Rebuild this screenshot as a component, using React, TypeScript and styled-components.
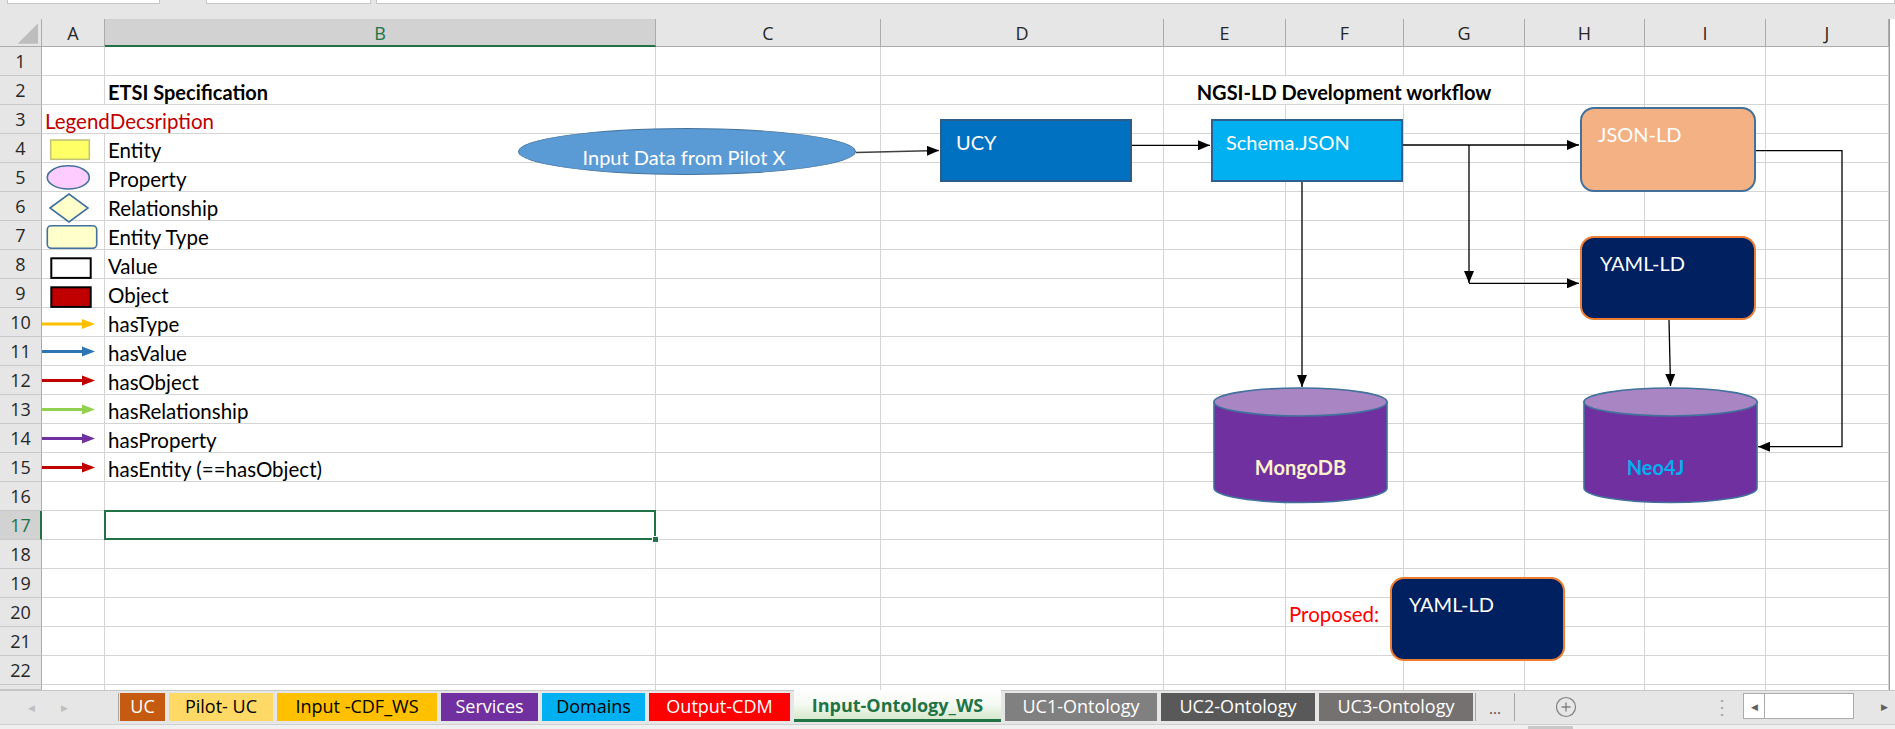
import React from 'react';
import styled, { createGlobalStyle } from 'styled-components';

const CELL_FONT = `Lato, "Liberation Sans", sans-serif`;
const UI_FONT = `"Open Sans", "Noto Sans", sans-serif`;
const GREEN = '#217346';
const GRID = '#D4D4D4';
const HEAD_LINE = '#ABABAB';

const COLS = ['A', 'B', 'C', 'D', 'E', 'F', 'G', 'H', 'I', 'J'];
const WIDTHS = [63, 551, 225, 283, 122, 118, 121, 120, 121, 123];
const ROW_COUNT = 22;
const ACTIVE_COL = 1;
const ACTIVE_ROW = 17;

type IconKind =
	| 'entity'
	| 'property'
	| 'relationship'
	| 'entityType'
	| 'value'
	| 'object'
	| 'hasType'
	| 'hasValue'
	| 'hasObject'
	| 'hasRelationship'
	| 'hasProperty'
	| 'hasEntity';

type CellSpec = {
	col: number;
	span?: number;
	text?: string;
	bold?: boolean;
	color?: string;
	center?: boolean;
	icon?: IconKind;
	selected?: boolean;
};

const ROWS: Record<number, CellSpec[]> = {
	2: [
		{ col: 1, text: 'ETSI Specification', bold: true },
		{ col: 4, span: 3, text: 'NGSI-LD Development workflow', bold: true, center: true },
	],
	3: [{ col: 0, span: 2, text: 'LegendDecsription', color: '#C00000' }],
	4: [{ col: 0, icon: 'entity' }, { col: 1, text: 'Entity' }],
	5: [{ col: 0, icon: 'property' }, { col: 1, text: 'Property' }],
	6: [{ col: 0, icon: 'relationship' }, { col: 1, text: 'Relationship' }],
	7: [{ col: 0, icon: 'entityType' }, { col: 1, text: 'Entity Type' }],
	8: [{ col: 0, icon: 'value' }, { col: 1, text: 'Value' }],
	9: [{ col: 0, icon: 'object' }, { col: 1, text: 'Object' }],
	10: [{ col: 0, icon: 'hasType' }, { col: 1, text: 'hasType' }],
	11: [{ col: 0, icon: 'hasValue' }, { col: 1, text: 'hasValue' }],
	12: [{ col: 0, icon: 'hasObject' }, { col: 1, text: 'hasObject' }],
	13: [{ col: 0, icon: 'hasRelationship' }, { col: 1, text: 'hasRelationship' }],
	14: [{ col: 0, icon: 'hasProperty' }, { col: 1, text: 'hasProperty' }],
	15: [{ col: 0, icon: 'hasEntity' }, { col: 1, text: 'hasEntity (==hasObject)' }],
	17: [{ col: 1, selected: true }],
	20: [{ col: 5, text: 'Proposed:', color: '#FF0000' }],
};

const ARROW_COLORS: Record<string, string> = {
	hasType: '#FFC000',
	hasValue: '#2E75B6',
	hasObject: '#C00000',
	hasRelationship: '#92D050',
	hasProperty: '#7030A0',
	hasEntity: '#C00000',
};

const TABS = [
	{ label: 'UC', bg: '#C55A11', fg: '#fff', w: 45 },
	{ label: 'Pilot- UC', bg: '#FFD966', fg: '#000', w: 104 },
	{ label: 'Input -CDF_WS', bg: '#FFC000', fg: '#000', w: 160 },
	{ label: 'Services', bg: '#7030A0', fg: '#fff', w: 97 },
	{ label: 'Domains', bg: '#00B0F0', fg: '#000', w: 103 },
	{ label: 'Output-CDM', bg: '#FF0000', fg: '#fff', w: 141 },
	{ label: 'Input-Ontology_WS', bg: '', fg: GREEN, w: 207, active: true },
	{ label: 'UC1-Ontology', bg: '#808080', fg: '#fff', w: 152 },
	{ label: 'UC2-Ontology', bg: '#595959', fg: '#fff', w: 154 },
	{ label: 'UC3-Ontology', bg: '#767171', fg: '#fff', w: 154 },
];

const LegendIcon = ({ kind }: { kind: IconKind }) => {
	const blue = '#41719C';
	let shape: React.ReactNode = null;
	switch (kind) {
		case 'entity':
			shape = <rect x={8.7} y={6} width={38.6} height={19.3} fill="#FFFF66" stroke="#C4C47A" strokeWidth={1.6} />;
			break;
		case 'property':
			shape = <ellipse cx={26.3} cy={14.4} rx={21} ry={11.6} fill="#FFCCFF" stroke={blue} strokeWidth={1.6} />;
			break;
		case 'relationship':
			shape = <polygon points="8,16 27,2 46,16 27,30" fill="#FFFFCC" stroke={blue} strokeWidth={1.6} />;
			break;
		case 'entityType':
			shape = <rect x={5.3} y={4.7} width={49.4} height={22.6} rx={4} fill="#FFFFCC" stroke={blue} strokeWidth={1.6} />;
			break;
		case 'value':
			shape = <rect x={9.3} y={8.3} width={39.4} height={19.6} fill="#fff" stroke="#000" strokeWidth={2} />;
			break;
		case 'object':
			shape = <rect x={9.3} y={8.3} width={39.4} height={19.6} fill="#C00000" stroke="#000" strokeWidth={2} />;
			break;
		default: {
			const c = ARROW_COLORS[kind];
			const y = kind === 'hasType' ? 16 : 14.6;
			shape = (
				<g>
					<line x1={0} y1={y} x2={41} y2={y} stroke={c} strokeWidth={3} />
					<polygon points={`40,${y - 5} 53,${y} 40,${y + 5}`} fill={c} />
				</g>
			);
		}
	}
	return (
		<IconSvg width={62} height={28} viewBox="0 0 62 28">
			{shape}
		</IconSvg>
	);
};

const CornerMark = () => (
	<svg width={42} height={28} viewBox="0 0 42 28">
		<polygon points="18,25 39,25 39,4" fill="#BDBDBD" />
	</svg>
);

const Cylinder = ({ x, y, label, color, shift }: { x: number; y: number; label: string; color: string; shift: number }) => (
	<CylNode $x={x} $y={y}>
		<CylSvg width={175} height={117} viewBox="0 0 175 117">
			<path
				d="M1,15 L1,101 A86.5,14.5 0 0 0 174,101 L174,15 Z"
				fill="#7030A0"
				stroke="#41719C"
				strokeWidth={1.6}
			/>
			<ellipse cx={87.5} cy={15} rx={86.5} ry={14} fill="#A985C4" stroke="#41719C" strokeWidth={1.6} />
		</CylSvg>
		<CylLabel $color={color} $shift={shift}>{label}</CylLabel>
	</CylNode>
);

const Connectors = () => (
	<Wires width={1895} height={729} viewBox="0 0 1895 729">
		<defs>
			<marker
				id="ah"
				viewBox="0 0 12 10"
				refX={12}
				refY={5}
				markerWidth={12}
				markerHeight={10}
				markerUnits="userSpaceOnUse"
				orient="auto"
			>
				<path d="M0,0 L12,5 L0,10 Z" fill="#000" />
			</marker>
		</defs>
		<g stroke="#000" strokeWidth={1.3} fill="none">
			<line x1={856} y1={152.5} x2={939} y2={150.5} stroke="#404040" markerEnd="url(#ah)" />
			<line x1={1132} y1={145.3} x2={1210} y2={145.3} markerEnd="url(#ah)" />
			<line x1={1403} y1={145} x2={1579} y2={145} markerEnd="url(#ah)" />
			<line x1={1469} y1={145} x2={1469} y2={283} markerEnd="url(#ah)" />
			<line x1={1469} y1={283.3} x2={1579} y2={283.3} markerEnd="url(#ah)" />
			<line x1={1302} y1={182} x2={1302} y2={387} markerEnd="url(#ah)" />
			<line x1={1669} y1={320} x2={1670.5} y2={386} markerEnd="url(#ah)" />
			<polyline points="1756,150.7 1842,150.7 1842,446.7 1758,446.7" markerEnd="url(#ah)" />
		</g>
	</Wires>
);

const renderRow = (r: number) => {
	const specs = ROWS[r] || [];
	const out: React.ReactNode[] = [];
	out.push(
		<RowHead key={`h${r}`} $active={r === ACTIVE_ROW}>
			{r}
		</RowHead>
	);
	let c = 0;
	while (c < COLS.length) {
		const spec = specs.find((s) => s.col === c);
		const span = spec?.span || 1;
		if (spec?.icon) {
			out.push(
				<IconCell key={`${r}-${c}`}>
					<LegendIcon kind={spec.icon} />
				</IconCell>
			);
		} else {
			out.push(
				<Cell
					key={`${r}-${c}`}
					$span={span}
					$bold={!!spec?.bold}
					$color={spec?.color || '#000'}
					$center={!!spec?.center}
					$selected={!!spec?.selected}
				>
					{spec?.text}
				</Cell>
			);
		}
		c += span;
	}
	return out;
};

const App = () => {
	const rows: React.ReactNode[] = [];
	for (let r = 1; r <= ROW_COUNT; r++) rows.push(...renderRow(r));

	return (
		<>
			<GlobalStyle />
			<Page>
				<TopStrip>
					<FormulaBox $w={151} $ml={7} />
					<FormulaBox $w={163} $ml={46} />
					<FormulaBox $w={0} $ml={5} $grow />
				</TopStrip>

				<SheetArea>
					<Grid>
						<Corner>
							<CornerMark />
						</Corner>
						{COLS.map((l, i) => (
							<ColHead key={l} $active={i === ACTIVE_COL}>
								{l}
							</ColHead>
						))}
						{rows}
						<RowHead $active={false} />
						{COLS.map((l) => (
							<TailCell key={`t${l}`} />
						))}
					</Grid>
					<VScroll />
				</SheetArea>

				<TabBar>
					<TabNav>
						<NavArrow>◀</NavArrow>
						<NavArrow>▶</NavArrow>
					</TabNav>
					<TabList>
						{TABS.map((t) =>
							t.active ? (
								<ActiveTab key={t.label} $w={t.w}>
									{t.label}
								</ActiveTab>
							) : (
								<Tab key={t.label} $w={t.w} $bg={t.bg} $fg={t.fg}>
									{t.label}
								</Tab>
							)
						)}
						<MoreTabs>...</MoreTabs>
						<AddSheet>
							<svg width={22} height={22} viewBox="0 0 22 22">
								<circle cx={11} cy={11} r={9.5} fill="none" stroke="#7F7F7F" strokeWidth={1.2} />
								<path d="M11 6.5v9M6.5 11h9" stroke="#7F7F7F" strokeWidth={1.3} />
							</svg>
						</AddSheet>
					</TabList>
					<Splitter>⋮</Splitter>
					<HScroll>
						<ScrollBtn>◀</ScrollBtn>
						<ScrollThumb />
						<ScrollTrack />
						<ScrollBtn $plain>▶</ScrollBtn>
					</HScroll>
				</TabBar>
				<BottomStrip>
					<BottomThumb />
				</BottomStrip>

				<Canvas>
					<Connectors />
					<EllipseNode>Input Data from Pilot X</EllipseNode>
					<BoxNode $x={940} $y={119} $w={192} $h={63} $bg="#0070C0" $border="#2E5C8A" $pl={14} $pt={9}>
						UCY
					</BoxNode>
					<BoxNode $x={1211} $y={119} $w={192} $h={63} $bg="#00B0F0" $border="#2F5F8F" $pl={13} $pt={9}>
						Schema.JSON
					</BoxNode>
					<BoxNode $x={1580} $y={107} $w={176} $h={85} $bg="#F4B183" $border="#41719C" $radius={14} $pl={16} $pt={13}>
						JSON-LD
					</BoxNode>
					<BoxNode $x={1580} $y={236} $w={176} $h={84} $bg="#002060" $border="#ED7D31" $radius={14} $pl={18} $pt={13}>
						YAML-LD
					</BoxNode>
					<BoxNode $x={1390} $y={577} $w={175} $h={84} $bg="#002060" $border="#ED7D31" $radius={14} $pl={17} $pt={13}>
						YAML-LD
					</BoxNode>
					<Cylinder x={1213} y={387} label="MongoDB" color="#FFF2CC" shift={0} />
					<Cylinder x={1583} y={387} label="Neo4J" color="#00B0F0" shift={30} />
				</Canvas>
			</Page>
		</>
	);
};

export default App;

const GlobalStyle = createGlobalStyle`
	html, body {
		margin: 0;
		padding: 0;
		background: #E6E6E6;
	}
	body {
		width: 1895px;
		height: 729px;
		overflow: hidden;
	}
`;

const Page = styled.div`
	position: relative;
	width: 1895px;
	height: 729px;
	background: #E6E6E6;
	overflow: hidden;
`;

const TopStrip = styled.div`
	display: flex;
	height: 19px;
	align-items: flex-start;
`;

const FormulaBox = styled.div<{ $w: number; $ml: number; $grow?: boolean }>`
	width: ${(p) => (p.$grow ? 'auto' : `${p.$w}px`)};
	flex: ${(p) => (p.$grow ? 1 : 'none')};
	margin-left: ${(p) => p.$ml}px;
	height: 3px;
	background: #fff;
	border: 1px solid #C6C6C6;
	border-top: none;
`;

const SheetArea = styled.div`
	display: flex;
	height: 671px;
`;

const Grid = styled.div`
	display: grid;
	grid-template-columns: 42px ${WIDTHS.map((w) => `${w}px`).join(' ')};
	grid-template-rows: 28px repeat(${ROW_COUNT}, 29px) 5px;
	width: 1889px;
	flex: none;
	background: #fff;
	overflow: hidden;
`;

const Corner = styled.div`
	background: #E6E6E6;
	border-right: 1px solid ${HEAD_LINE};
	border-bottom: 1px solid ${HEAD_LINE};
	box-sizing: border-box;
	display: flex;
	align-items: flex-start;
	svg {
		display: block;
	}
`;

const ColHead = styled.div<{ $active: boolean }>`
	box-sizing: border-box;
	background: ${(p) => (p.$active ? '#D2D2D2' : '#E6E6E6')};
	border-right: 1px solid ${HEAD_LINE};
	border-bottom: ${(p) => (p.$active ? `2px solid ${GREEN}` : `1px solid ${HEAD_LINE}`)};
	color: ${(p) => (p.$active ? GREEN : '#262626')};
	font-family: ${UI_FONT};
	font-size: 18px;
	display: flex;
	align-items: center;
	justify-content: center;
	padding-top: ${(p) => (p.$active ? 1 : 0)}px;
`;

const RowHead = styled.div<{ $active: boolean }>`
	box-sizing: border-box;
	background: ${(p) => (p.$active ? '#D2D2D2' : '#E6E6E6')};
	border-right: ${(p) => (p.$active ? `2px solid ${GREEN}` : `1px solid ${HEAD_LINE}`)};
	border-bottom: 1px solid #C8C8C8;
	color: ${(p) => (p.$active ? GREEN : '#262626')};
	font-family: ${UI_FONT};
	font-size: 18px;
	display: flex;
	align-items: center;
	justify-content: center;
	padding-left: ${(p) => (p.$active ? 1 : 0)}px;
`;

const Cell = styled.div<{ $span: number; $bold: boolean; $color: string; $center: boolean; $selected: boolean }>`
	position: relative;
	box-sizing: border-box;
	grid-column: span ${(p) => p.$span};
	border-right: 1px solid ${GRID};
	border-bottom: 1px solid ${GRID};
	display: flex;
	align-items: flex-end;
	justify-content: ${(p) => (p.$center ? 'center' : 'flex-start')};
	padding: 0 3px 0 3px;
	font-family: ${CELL_FONT};
	font-size: ${(p) => (p.$bold ? 20 : 20.5)}px;
	line-height: 24px;
	font-weight: ${(p) => (p.$bold ? 700 : 400)};
	color: ${(p) => p.$color};
	white-space: nowrap;
	${(p) =>
		p.$selected &&
		`
		&::after {
			content: '';
			position: absolute;
			left: -1px;
			top: -1px;
			right: -1px;
			bottom: -1px;
			border: 2px solid ${GREEN};
			z-index: 1;
		}
		&::before {
			content: '';
			position: absolute;
			right: -4px;
			bottom: -4px;
			width: 5px;
			height: 5px;
			background: ${GREEN};
			border: 1px solid #fff;
			z-index: 2;
		}
	`}
`;

const IconCell = styled.div`
	box-sizing: border-box;
	border-right: 1px solid ${GRID};
	border-bottom: 1px solid ${GRID};
	position: relative;
	z-index: 1;
`;

const IconSvg = styled.svg`
	display: block;
	overflow: visible;
`;

const TailCell = styled.div`
	border-right: 1px solid ${GRID};
`;

const VScroll = styled.div`
	flex: 1;
	background: #fff;
	border-left: 1px solid #9B9B9B;
`;

const TabBar = styled.div`
	display: flex;
	align-items: flex-start;
	height: 34px;
	box-sizing: border-box;
	border-top: 1px solid #C6C6C6;
	background: #E6E6E6;
	& > * {
		flex-shrink: 0;
	}
`;

const TabNav = styled.div`
	width: 119px;
	height: 28px;
	margin-top: 2px;
	display: flex;
	align-items: center;
	gap: 26px;
	padding-left: 28px;
	box-sizing: border-box;
	border-right: 1px solid #A6A6A6;
`;

const NavArrow = styled.span`
	font-family: ${UI_FONT};
	font-size: 9px;
	color: #BFBFBF;
`;

const TabList = styled.div`
	display: flex;
	align-items: flex-start;
	gap: 4px;
	margin-left: 1px;
	& > * {
		flex-shrink: 0;
	}
`;

const Tab = styled.div<{ $w: number; $bg: string; $fg: string }>`
	width: ${(p) => p.$w}px;
	height: 28px;
	margin-top: 2px;
	background: ${(p) => p.$bg};
	color: ${(p) => p.$fg};
	font-family: ${UI_FONT};
	font-size: 18px;
	line-height: 26px;
	text-align: center;
	white-space: nowrap;
`;

const ActiveTab = styled.div<{ $w: number }>`
	width: ${(p) => p.$w}px;
	height: 32px;
	box-sizing: border-box;
	margin-top: -1px;
	background: linear-gradient(to bottom, #ffffff 0%, #f4f9f1 50%, #d5e8cc 100%);
	border-bottom: 3px solid ${GREEN};
	color: ${GREEN};
	font-family: ${UI_FONT};
	font-size: 18px;
	font-weight: 700;
	line-height: 30px;
	text-align: center;
	white-space: nowrap;
`;

const MoreTabs = styled.div`
	width: 38px;
	height: 28px;
	margin-top: 2px;
	border-left: 1px solid #A6A6A6;
	border-right: 1px solid #A6A6A6;
	font-family: ${UI_FONT};
	font-size: 15px;
	color: #444;
	text-align: center;
	line-height: 30px;
	margin-left: -2px;
`;

const AddSheet = styled.div`
	margin-left: 36px;
	margin-top: 5px;
	svg {
		display: block;
	}
`;

const Splitter = styled.div`
	width: 8px;
	margin-left: 135px;
	margin-top: 2px;
	font-family: ${UI_FONT};
	font-size: 20px;
	color: #A6A6A6;
	line-height: 28px;
	text-align: center;
`;

const HScroll = styled.div`
	display: flex;
	margin-left: 23px;
	margin-top: 2px;
	height: 26px;
	flex: 1;
	flex-shrink: 1;
	min-width: 0;
`;

const ScrollBtn = styled.div<{ $plain?: boolean }>`
	width: 22px;
	flex: none;
	box-sizing: border-box;
	border: ${(p) => (p.$plain ? 'none' : '1px solid #ABABAB')};
	background: ${(p) => (p.$plain ? '#E6E6E6' : '#fff')};
	font-family: ${UI_FONT};
	font-size: 9px;
	color: #606060;
	display: flex;
	align-items: center;
	justify-content: center;
`;

const ScrollThumb = styled.div`
	width: 88px;
	flex: none;
	background: #fff;
	border: 1px solid #ABABAB;
	border-left: none;
`;

const ScrollTrack = styled.div`
	flex: 1;
	background: #E6E6E6;
`;

const BottomStrip = styled.div`
	height: 5px;
	background: #F0F0F0;
	border-top: 1px solid #D0D0D0;
	box-sizing: border-box;
	position: relative;
`;

const BottomThumb = styled.div`
	position: absolute;
	left: 1528px;
	top: 1px;
	width: 45px;
	height: 4px;
	background: #C8C8C8;
`;

const Canvas = styled.div`
	position: absolute;
	left: 0;
	top: 0;
	width: 1895px;
	height: 729px;
	pointer-events: none;
	z-index: 3;
`;

const Wires = styled.svg`
	position: absolute;
	left: 0;
	top: 0;
`;

const EllipseNode = styled.div`
	position: absolute;
	left: 518px;
	top: 128px;
	width: 338px;
	height: 47px;
	box-sizing: border-box;
	border-radius: 50%;
	background: #5B9BD5;
	border: 1.6px solid #41719C;
	display: flex;
	align-items: center;
	justify-content: center;
	padding: 10px 6px 0 0;
	color: #fff;
	font-family: ${CELL_FONT};
	font-size: 20px;
	line-height: 24px;
	white-space: nowrap;
`;

const BoxNode = styled.div<{
	$x: number;
	$y: number;
	$w: number;
	$h: number;
	$bg: string;
	$border: string;
	$radius?: number;
	$pl: number;
	$pt: number;
}>`
	position: absolute;
	left: ${(p) => p.$x}px;
	top: ${(p) => p.$y}px;
	width: ${(p) => p.$w}px;
	height: ${(p) => p.$h}px;
	box-sizing: border-box;
	background: ${(p) => p.$bg};
	border: 2px solid ${(p) => p.$border};
	border-radius: ${(p) => p.$radius || 0}px;
	padding: ${(p) => p.$pt}px 0 0 ${(p) => p.$pl}px;
	color: #fff;
	font-family: ${CELL_FONT};
	font-size: 20px;
	line-height: 24px;
	white-space: nowrap;
`;

const CylNode = styled.div<{ $x: number; $y: number }>`
	position: absolute;
	left: ${(p) => p.$x}px;
	top: ${(p) => p.$y}px;
	width: 175px;
	height: 117px;
	display: flex;
	justify-content: center;
	align-items: center;
`;

const CylSvg = styled.svg`
	position: absolute;
	left: 0;
	top: 0;
`;

const CylLabel = styled.span<{ $color: string; $shift: number }>`
	position: relative;
	padding: 42px ${(p) => p.$shift}px 0 0;
	color: ${(p) => p.$color};
	font-family: ${CELL_FONT};
	font-size: 20px;
	font-weight: 700;
	line-height: 24px;
`;
